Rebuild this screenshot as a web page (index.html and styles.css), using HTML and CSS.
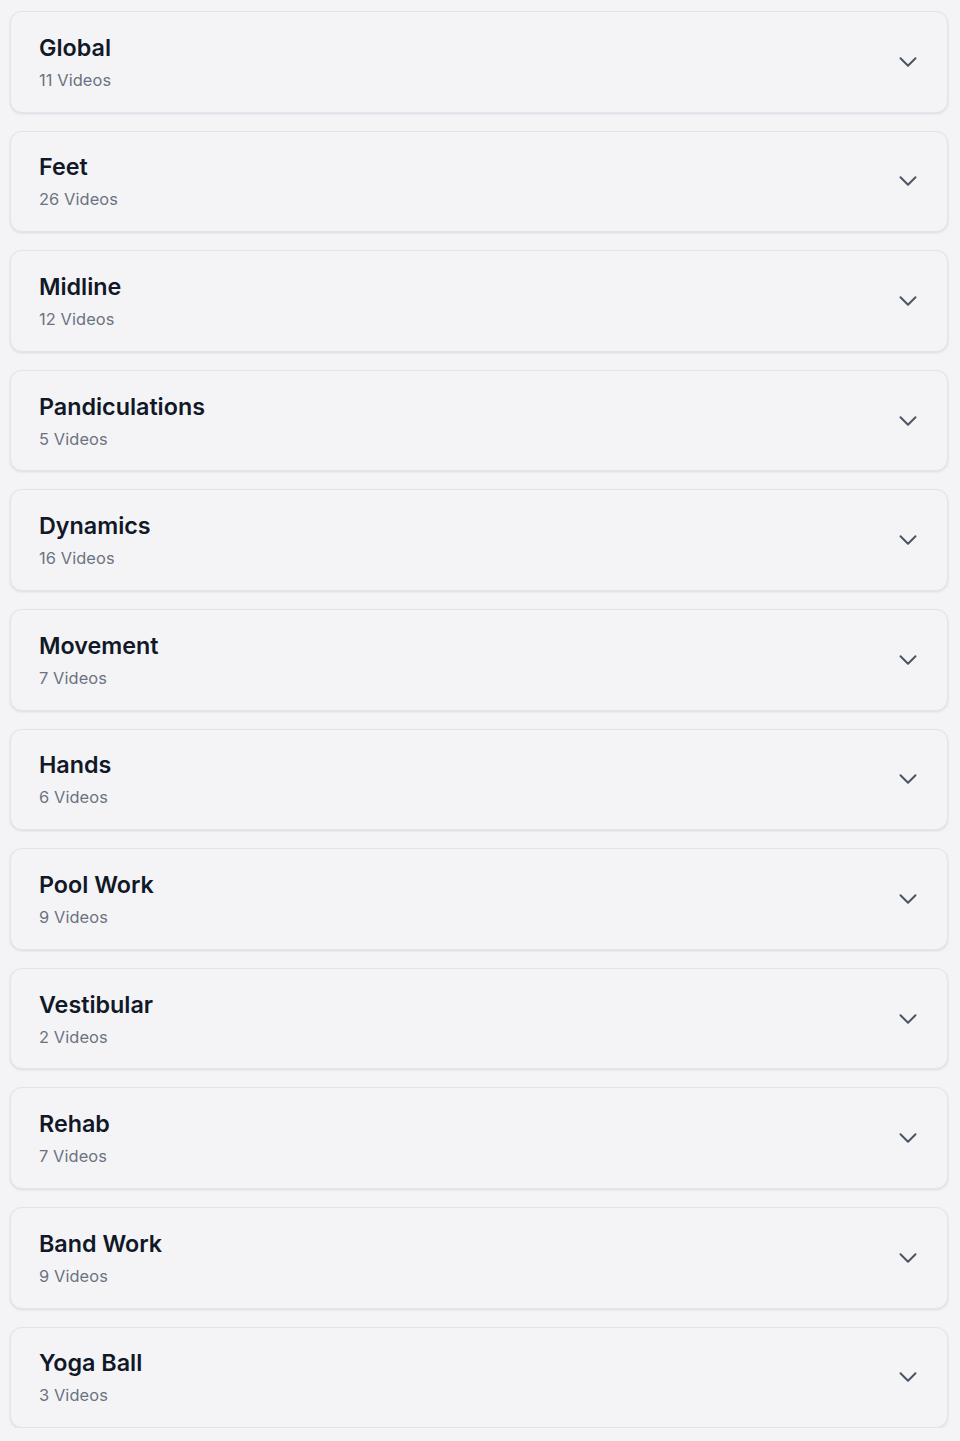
FILE: index.html
```html
<!DOCTYPE html>
<html lang="en">
<head>
<meta charset="utf-8">
<title>Video Categories</title>
<link rel="stylesheet" href="styles.css">
</head>
<body>
<div class="list">
  <div class="card"><div class="info"><div class="title">Global</div><div class="count">11 Videos</div></div><svg class="chev" viewBox="0 0 24 24"><path d="m19.5 8.25-7.5 7.5-7.5-7.5"/></svg></div>
  <div class="card"><div class="info"><div class="title">Feet</div><div class="count">26 Videos</div></div><svg class="chev" viewBox="0 0 24 24"><path d="m19.5 8.25-7.5 7.5-7.5-7.5"/></svg></div>
  <div class="card"><div class="info"><div class="title">Midline</div><div class="count">12 Videos</div></div><svg class="chev" viewBox="0 0 24 24"><path d="m19.5 8.25-7.5 7.5-7.5-7.5"/></svg></div>
  <div class="card"><div class="info"><div class="title">Pandiculations</div><div class="count">5 Videos</div></div><svg class="chev" viewBox="0 0 24 24"><path d="m19.5 8.25-7.5 7.5-7.5-7.5"/></svg></div>
  <div class="card"><div class="info"><div class="title">Dynamics</div><div class="count">16 Videos</div></div><svg class="chev" viewBox="0 0 24 24"><path d="m19.5 8.25-7.5 7.5-7.5-7.5"/></svg></div>
  <div class="card"><div class="info"><div class="title">Movement</div><div class="count">7 Videos</div></div><svg class="chev" viewBox="0 0 24 24"><path d="m19.5 8.25-7.5 7.5-7.5-7.5"/></svg></div>
  <div class="card"><div class="info"><div class="title">Hands</div><div class="count">6 Videos</div></div><svg class="chev" viewBox="0 0 24 24"><path d="m19.5 8.25-7.5 7.5-7.5-7.5"/></svg></div>
  <div class="card"><div class="info"><div class="title">Pool Work</div><div class="count">9 Videos</div></div><svg class="chev" viewBox="0 0 24 24"><path d="m19.5 8.25-7.5 7.5-7.5-7.5"/></svg></div>
  <div class="card"><div class="info"><div class="title">Vestibular</div><div class="count">2 Videos</div></div><svg class="chev" viewBox="0 0 24 24"><path d="m19.5 8.25-7.5 7.5-7.5-7.5"/></svg></div>
  <div class="card"><div class="info"><div class="title">Rehab</div><div class="count">7 Videos</div></div><svg class="chev" viewBox="0 0 24 24"><path d="m19.5 8.25-7.5 7.5-7.5-7.5"/></svg></div>
  <div class="card"><div class="info"><div class="title">Band Work</div><div class="count">9 Videos</div></div><svg class="chev" viewBox="0 0 24 24"><path d="m19.5 8.25-7.5 7.5-7.5-7.5"/></svg></div>
  <div class="card"><div class="info"><div class="title">Yoga Ball</div><div class="count">3 Videos</div></div><svg class="chev" viewBox="0 0 24 24"><path d="m19.5 8.25-7.5 7.5-7.5-7.5"/></svg></div>
</div>
</body>
</html>
```

FILE: styles.css
```css
html, body {
  margin: 0;
  padding: 0;
  background: #f4f4f7;
}
body {
  font-family: Inter, "Noto Sans", sans-serif;
}
.list {
  display: flex;
  flex-direction: column;
  gap: 18px;
  padding: 11px 12px 0 10px;
}
.card {
  display: flex;
  align-items: center;
  justify-content: space-between;
  padding: 19.8px 27px 19.8px 28px;
  border: 1px solid #e3e3ee;
  border-radius: 12px;
  background: #f4f4f7;
  box-shadow: 0 1px 3px rgba(20, 20, 60, 0.08), 0 1px 2px rgba(20, 20, 60, 0.04);
}
.info {
  display: flex;
  flex-direction: column;
  gap: 4px;
}
.title {
  font-size: 23.3px;
  line-height: 32px;
  font-weight: 600;
  color: #111827;
}
.count {
  font-size: 16.4px;
  line-height: 24px;
  color: #6b7280;
  letter-spacing: 0.1px;
}
.chev {
  width: 24px;
  height: 24px;
  fill: none;
  stroke: #4b5563;
  stroke-width: 2;
  stroke-linecap: round;
  stroke-linejoin: round;
}
```
